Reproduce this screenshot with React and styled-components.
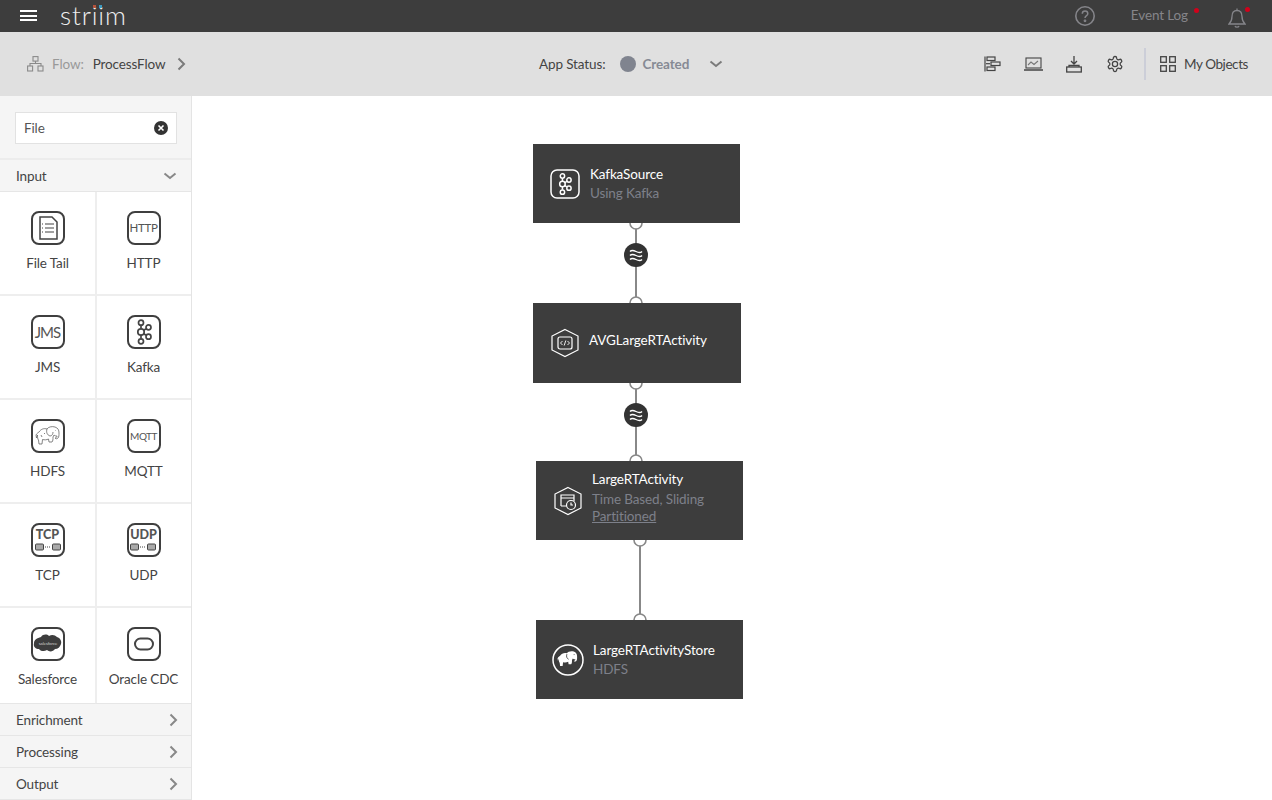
import React from "react";
import styled, { createGlobalStyle } from "styled-components";

const Global = createGlobalStyle`
  html, body { margin: 0; padding: 0; background: #fff; }
  body { font-family: "Lato", "Noto Sans", sans-serif; font-size: 13.5px; letter-spacing: -.12px; color: #444; }
  * { box-sizing: border-box; }
`;
const Page = styled.div`display:flex;flex-direction:column;width:1272px;height:800px;overflow:hidden;`;
const TopBar = styled.header`height:32px;background:#3d3d3d;display:flex;align-items:center;padding:0 21px 0 20px;flex:none;`;
const Burger = styled.div`width:17px;height:11px;margin-top:-1px;border-top:2px solid #fff;border-bottom:2px solid #fff;position:relative;
  &::after{content:"";position:absolute;left:0;right:0;top:2.5px;height:2px;background:#fff;}`;
const Logo = styled.div`position:relative;margin-left:23px;font-size:26px;line-height:32px;font-weight:300;color:#eee;letter-spacing:.85px;height:32px;margin-top:-2px;`;
const LogoDot = styled.i`position:absolute;top:6px;left:${p=>p.$x}px;width:3px;height:3px;background:${p=>p.$c};`;
const Spacer = styled.div`flex:1;`;
const EventLog = styled.span`color:#85858a;margin-left:35px;position:relative;margin-right:40px;margin-top:-2px;
  &::after{content:"";position:absolute;right:-11px;top:1px;width:5px;height:5px;border-radius:50%;background:#d0021b;}`;
const BellWrap = styled.div`position:relative;width:22px;height:22px;margin-top:3px;margin-right:1px;
  &::after{content:"";position:absolute;right:0;top:0;width:5px;height:5px;border-radius:50%;background:#d0021b;}`;
const SubBar = styled.div`height:64px;background:#e0e0e0;display:grid;grid-template-columns:539px auto 1fr;align-items:center;flex:none;`;
const FlowCrumb = styled.div`display:flex;align-items:center;padding-left:27px;`;
const FlowLabel = styled.span`color:#999;margin-left:8px;`;
const FlowName = styled.span`color:#444;margin-left:9px;`;
const CrumbChevron = styled.span`margin-left:9px;display:flex;`;
const Status = styled.div`display:flex;align-items:center;`;
const StatusDot = styled.span`width:16px;height:16px;border-radius:50%;background:#80848f;margin:0 6px 0 15px;`;
const StatusText = styled.span`font-weight:700;color:#868a94;margin-right:20px;`;
const Tools = styled.div`display:flex;align-items:center;justify-content:flex-end;padding-right:24px;`;
const ToolBtn = styled.div`width:41px;display:flex;justify-content:center;`;
const Divider = styled.div`width:2px;height:32px;background:#ccced8;margin:0 14px 0 8px;`;
const MyObjects = styled.span`color:#444;margin-left:8px;letter-spacing:-.42px;`;
const Main = styled.div`flex:1;display:flex;min-height:0;`;
const Sidebar = styled.aside`width:192px;flex:none;background:#f5f5f5;border-right:1px solid #e4e4e4;display:flex;flex-direction:column;`;
const SearchArea = styled.div`height:64px;padding:16px 15px;border-bottom:2px solid #ececec;flex:none;`;
const SearchBox = styled.div`width:162px;height:32px;background:#fff;border:1px solid #e2e2e2;display:flex;align-items:center;justify-content:space-between;padding:0 8px;color:#555;`;
const SearchText = styled.span`margin-top:-1px;`;
const Section = styled.div`height:32px;flex:none;display:flex;align-items:center;justify-content:space-between;padding:0 ${p=>p.$open?14:11}px 0 16px;color:#444;border-bottom:1px solid #e6e6e6;`;
const Grid = styled.div`flex:none;height:512px;display:grid;grid-template-columns:96px 95px;grid-template-rows:104px 104px 104px 104px 96px;background:#fff;`;
const Cell = styled.div`display:flex;flex-direction:column;align-items:center;padding-top:19px;border-bottom:${p=>p.$last?"1px solid #e6e6e6":"2px solid #eee"};border-right:${p=>p.$right?"none":"2px solid #eee"};margin-right:${p=>p.$right?0:-1}px;`;
const IconBox = styled.div`width:34px;height:34px;border:2px solid #3f3f3f;border-radius:8px;display:flex;align-items:center;justify-content:center;overflow:hidden;color:#444;background:#fff;`;
const BoxText = styled.span`font-size:${p=>p.$s}px;font-weight:${p=>p.$w||400};line-height:1;letter-spacing:${p=>p.$ls||0}px;color:#555;`;
const TcpBox = styled.div`display:flex;flex-direction:column;align-items:center;gap:1px;`;
const CellLabel = styled.div`margin-top:9px;line-height:18px;color:#444;white-space:nowrap;`;
const Canvas = styled.main`flex:1;position:relative;background:#fff;`;
const Wires = styled.svg`position:absolute;left:0;top:0;width:1080px;height:704px;`;
const Node = styled.div`position:absolute;left:${p=>p.$x}px;top:${p=>p.$y}px;width:${p=>p.$w}px;height:${p=>p.$h}px;background:#3d3d3d;display:flex;align-items:center;padding-left:${p=>p.$pad}px;`;
const NodeIcon = styled.div`width:${p=>p.$w||30}px;height:32px;display:flex;align-items:center;justify-content:center;flex:none;margin-right:${p=>p.$gap}px;`;
const NodeText = styled.div`display:flex;flex-direction:column;margin-top:${p=>p.$mt||0}px;`;
const NodeTitle = styled.div`color:#fff;line-height:${p=>p.$lh||19}px;white-space:nowrap;`;
const NodeSub = styled.div`color:#7d808a;line-height:19px;white-space:nowrap;`;
const NodeLink = styled.div`color:#7d808a;line-height:15px;text-decoration:underline;`;

const Chev = ({dir="right",c="#7b7b7b",w=2,size=14}) => (
  <svg width={size} height={size} viewBox="0 0 14 14" fill="none" stroke={c} strokeWidth={w}>
    {dir==="right" ? <path d="M4.500 1.500 10 7l-5.500 5.500"/> : <path d="M1.500 4.500 7 9l5.500-4.500"/>}
  </svg>
);
const Kafka = ({c="#444",s=30}) => (
  <svg width={s} height={s} viewBox="0 0 30 30" fill="none" stroke={c} strokeWidth="1.700">
    <path d="M12 8v3.500M12 18v3.500M14.500 13.500 17 11.800M14.500 16.500 17 18.200"/>
    <circle cx="12" cy="5.700" r="2.500"/><circle cx="12" cy="15" r="3.200"/><circle cx="12" cy="24.300" r="2.500"/>
    <circle cx="19.500" cy="10.300" r="2.500"/><circle cx="19.500" cy="19.700" r="2.500"/>
  </svg>
);
const elephant = "M3 14c1-2 2-2 3-3 2-3 5-4 8-3 1-2 5-3 8-2 3 1 4 3 4 6 0 2 0 4-1 5-1 1-2 1-3 0 1 0 2-1 2-2-1 0-2 0-3-1l-1 2c0 2 0 4-1 5h-3l-.5-3c-2 1-4 1-6 .5L9 23H6l-.5-4c-1-1-1-3-1-5l-1 3z";
const Wave = () => <path d="M-6-3.500c1.500-1.600 3-1.600 6 0s4.500 1.600 6 0M-6 .5c1.500-1.600 3-1.600 6 0s4.500 1.600 6 0M-6 4.500c1.500-1.600 3-1.600 6 0s4.500 1.600 6 0" fill="none" stroke="#fff" strokeWidth="1.400"/>;
const Badge = ({x,y}) => <g transform={`translate(${x} ${y})`}><circle r="12" fill="#333"/><Wave/></g>;
const Port = ({x,y}) => <circle cx={x} cy={y} r="6" fill="#fff" stroke="#888" strokeWidth="1.600"/>;
const LinkIcon = () => <svg width="26" height="8" viewBox="0 0 26 8" fill="#aaa" stroke="#444" strokeWidth="1"><rect x=".5" y="1" width="8" height="6" rx="1"/><rect x="17.500" y="1" width="8" height="6" rx="1"/><path d="M10 4h6" strokeDasharray="1 1" fill="none"/></svg>;

const Cells = [
  ["File Tail", <svg width="22" height="26" viewBox="0 0 22 26" fill="none" stroke="#444" strokeWidth="1.200"><path d="M3 2h12l5 5v17H3z" strokeWidth="1.500"/><path d="M8 9h9M8 13h9M8 17h9"/><path d="M5 9h1M5 13h1M5 17h1"/></svg>],
  ["HTTP", <BoxText $s={11.500} $ls={-.3}>HTTP</BoxText>],
  ["JMS", <BoxText $s={15} $ls={-.9}>JMS</BoxText>],
  ["Kafka", <Kafka/>],
  ["HDFS", <svg width="30" height="30" viewBox="0 0 30 30" fill="none" stroke="#666" strokeWidth=".8"><path d={elephant}/><path d="M14 8c-1 3 0 6 3 7 2 0 3-2 3-4M22.500 9.500h.5M8 14l1 2M11 12l1 1"/></svg>],
  ["MQTT", <BoxText $s={10} $ls={-.5}>MQTT</BoxText>],
  ["TCP", <TcpBox><BoxText $s={12.500} $w={900}>TCP</BoxText><LinkIcon/></TcpBox>],
  ["UDP", <TcpBox><BoxText $s={12.500} $w={900}>UDP</BoxText><LinkIcon/></TcpBox>],
  ["Salesforce", <svg width="30" height="24" viewBox="0 0 30 24"><path d="M8 5c2-3 6-3 8-1 3-2 6-1 8 1 3 1 5 4 4 7s-3 5-6 5c-2 3-6 3-8 1-3 2-7 1-8-1-3 0-6-2-5-6 0-3 3-5 7-6z" fill="#3d3d3d"/><text x="15" y="13" fontSize="4.500" fontFamily="Lato" fill="#ccc" textAnchor="middle">salesforce</text></svg>],
  ["Oracle CDC", <svg width="22" height="16" viewBox="0 0 22 16" fill="none" stroke="#444" strokeWidth="2"><rect x="2" y="2.500" width="18" height="11" rx="5.500"/></svg>],
];

export default function App() {
  return (
    <Page>
      <Global/>
      <TopBar>
        <Burger/>
        <Logo>striim<LogoDot $x={33} $c="#b5533c"/><LogoDot $x={39} $c="#3d9bc0"/></Logo>
        <Spacer/>
        <svg width="22" height="22" viewBox="0 0 22 22" fill="none" stroke="#85858a" strokeWidth="1.600"><circle cx="11" cy="11" r="9.200"/><path d="M8.300 8.700c0-3.500 5.500-3.500 5.500 0 0 2-2.800 2-2.800 4.300" strokeWidth="1.500"/><circle cx="11" cy="15.800" r=".6"/></svg>
        <EventLog>Event Log</EventLog>
        <BellWrap><svg width="18" height="22" viewBox="0 0 18 22" fill="none" stroke="#85858a" strokeWidth="1.300"><path d="M9 1.500v2M9 3.500c-3.500 0-5 2.500-5 6 0 4-1.500 6-3 7.500h16c-1.500-1.500-3-3.500-3-7.500 0-3.500-1.500-6-5-6zM7 19c.5 1.500 3.500 1.500 4 0"/></svg></BellWrap>
      </TopBar>
      <SubBar>
        <FlowCrumb>
          <svg width="17" height="16" viewBox="0 0 17 16" fill="none" stroke="#8a8a8a" strokeWidth="1.100"><rect x="6" y=".6" width="5" height="4.500"/><rect x=".6" y="10" width="5" height="5"/><rect x="11" y="10" width="5" height="5"/><path d="M8.500 5v2.500M3 10V7.500h11V10"/></svg>
          <FlowLabel>Flow:</FlowLabel>
          <FlowName>ProcessFlow</FlowName>
          <CrumbChevron><Chev/></CrumbChevron>
        </FlowCrumb>
        <Status>
          <span>App Status:</span>
          <StatusDot/>
          <StatusText>Created</StatusText>
          <Chev dir="down"/>
        </Status>
        <Tools>
          <ToolBtn><svg width="17" height="16" viewBox="0 0 17 16" fill="none" stroke="#444" strokeWidth="1.200"><path d="M1 .5v15"/><rect x="3" y="1" width="8" height="3.500"/><rect x="7" y="6" width="9" height="3.500"/><rect x="3" y="11" width="8" height="3.500"/><path d="M2 7.700h4"/></svg></ToolBtn>
          <ToolBtn><svg width="19" height="14" viewBox="0 0 19 14" fill="none" stroke="#444" strokeWidth="1.100"><rect x="2" y="1" width="15" height="10"/><path d="M0 13h19" strokeWidth="1.500"/><path d="M4 8l3-3 3 2.500L14 4" stroke="#777"/></svg></ToolBtn>
          <ToolBtn><svg width="16" height="17" viewBox="0 0 16 17" fill="none" stroke="#444" strokeWidth="1.300"><path d="M8 0v8M5 5l3 3 3-3"/><rect x=".7" y="11" width="14.600" height="5"/><path d="M3 11V9.500h10V11"/></svg></ToolBtn>
          <ToolBtn><svg width="18" height="18" viewBox="0 0 24 24" fill="none" stroke="#444" strokeWidth="1.700"><path d="M12.220 2h-.44a2 2 0 0 0-2 2v.18a2 2 0 0 1-1 1.730l-.43.250a2 2 0 0 1-2 0l-.15-.080a2 2 0 0 0-2.730.730l-.22.380a2 2 0 0 0 .73 2.730l.15.100a2 2 0 0 1 1 1.720v.51a2 2 0 0 1-1 1.740l-.15.090a2 2 0 0 0-.73 2.730l.22.380a2 2 0 0 0 2.730.730l.15-.080a2 2 0 0 1 2 0l.43.250a2 2 0 0 1 1 1.730V20a2 2 0 0 0 2 2h.44a2 2 0 0 0 2-2v-.18a2 2 0 0 1 1-1.730l.43-.250a2 2 0 0 1 2 0l.15.080a2 2 0 0 0 2.730-.730l.22-.390a2 2 0 0 0-.73-2.730l-.15-.080a2 2 0 0 1-1-1.740v-.5a2 2 0 0 1 1-1.740l.15-.090a2 2 0 0 0 .73-2.730l-.22-.380a2 2 0 0 0-2.730-.730l-.15.080a2 2 0 0 1-2 0l-.43-.250a2 2 0 0 1-1-1.730V4a2 2 0 0 0-2-2z"/><circle cx="12" cy="12" r="3.500"/></svg></ToolBtn>
          <Divider/>
          <svg width="16" height="16" viewBox="0 0 16 16" fill="none" stroke="#444" strokeWidth="1.300"><rect x=".7" y=".7" width="5.600" height="5.600"/><rect x="9.700" y=".7" width="5.600" height="5.600"/><rect x=".7" y="9.700" width="5.600" height="5.600"/><rect x="9.700" y="9.700" width="5.600" height="5.600"/></svg>
          <MyObjects>My Objects</MyObjects>
        </Tools>
      </SubBar>
      <Main>
        <Sidebar>
          <SearchArea>
            <SearchBox><SearchText>File</SearchText>
              <svg width="14" height="14" viewBox="0 0 14 14"><circle cx="7" cy="7" r="7" fill="#333"/><path d="M4.500 4.500l5 5M9.500 4.500l-5 5" stroke="#fff" strokeWidth="1.600"/></svg>
            </SearchBox>
          </SearchArea>
          <Section $open>Input<Chev dir="down" c="#888"/></Section>
          <Grid>
            {Cells.map(([label, icon], i) => (
              <Cell key={label} $right={i%2===1} $last={i>=8}>
                <IconBox>{icon}</IconBox>
                <CellLabel>{label}</CellLabel>
              </Cell>
            ))}
          </Grid>
          <Section>Enrichment<Chev c="#888"/></Section>
          <Section>Processing<Chev c="#888"/></Section>
          <Section>Output<Chev c="#888"/></Section>
        </Sidebar>
        <Canvas>
          <Wires viewBox="0 0 1080 704">
            <path d="M444 127V207M444 287V365M448 444V524" stroke="#888" strokeWidth="2"/>
            <Port x={444} y={127}/><Port x={444} y={207}/><Port x={444} y={287}/><Port x={444} y={365}/><Port x={448} y={444}/><Port x={448} y={524}/>
            <Badge x={444} y={159}/><Badge x={444} y={319}/>
          </Wires>
          <Node $x={341} $y={48} $w={207} $h={79} $pad={17}>
            <NodeIcon $gap={10}><svg width="30" height="30" viewBox="0 0 30 30"><rect x="1" y="1" width="28" height="28" rx="6" fill="none" stroke="#fff" strokeWidth="1.500"/><g transform="translate(2 2) scale(.87)"><Kafka c="#fff"/></g></svg></NodeIcon>
            <NodeText><NodeTitle>KafkaSource</NodeTitle><NodeSub>Using Kafka</NodeSub></NodeText>
          </Node>
          <Node $x={341} $y={207} $w={208} $h={80} $pad={17}>
            <NodeIcon $gap={9}><svg width="30" height="32" viewBox="0 0 30 32" fill="none" stroke="#fff" strokeWidth="1.200"><path d="M15 2.500 28 9v14l-13 6.500L2 23V9z"/><rect x="8" y="10" width="14" height="12" rx="2"/><path d="M12.500 14l-2 2 2 2M17.500 14l2 2-2 2M15.800 13.500l-1.600 5" strokeWidth=".9"/></svg></NodeIcon>
            <NodeText $mt={-6}><NodeTitle>AVGLargeRTActivity</NodeTitle></NodeText>
          </Node>
          <Node $x={344} $y={365} $w={207} $h={79} $pad={17}>
            <NodeIcon $gap={9}><svg width="30" height="32" viewBox="0 0 30 32" fill="none" stroke="#fff" strokeWidth="1.200"><path d="M15 2.500 28 9v14l-13 6.500L2 23V9z"/><path d="M8 21V10h13v6M8 13h13M8 21h5"/><circle cx="18" cy="20" r="4.500"/><path d="M18 17.500V20h2"/></svg></NodeIcon>
            <NodeText $mt={-8}><NodeTitle $lh={21}>LargeRTActivity</NodeTitle><NodeSub>Time Based, Sliding</NodeSub><NodeLink>Partitioned</NodeLink></NodeText>
          </Node>
          <Node $x={344} $y={524} $w={207} $h={79} $pad={16}>
            <NodeIcon $w={32} $gap={9}><svg width="32" height="32" viewBox="0 0 32 32"><circle cx="16" cy="16" r="15" fill="none" stroke="#fff" strokeWidth="1.500"/><g transform="translate(3 2.500) scale(.85)"><path d={elephant} fill="#fff"/><path d="M14 9c-1 3 0 5 2 6M22 9.500h1" stroke="#3d3d3d" fill="none"/></g></svg></NodeIcon>
            <NodeText><NodeTitle>LargeRTActivityStore</NodeTitle><NodeSub>HDFS</NodeSub></NodeText>
          </Node>
        </Canvas>
      </Main>
    </Page>
  );
}
